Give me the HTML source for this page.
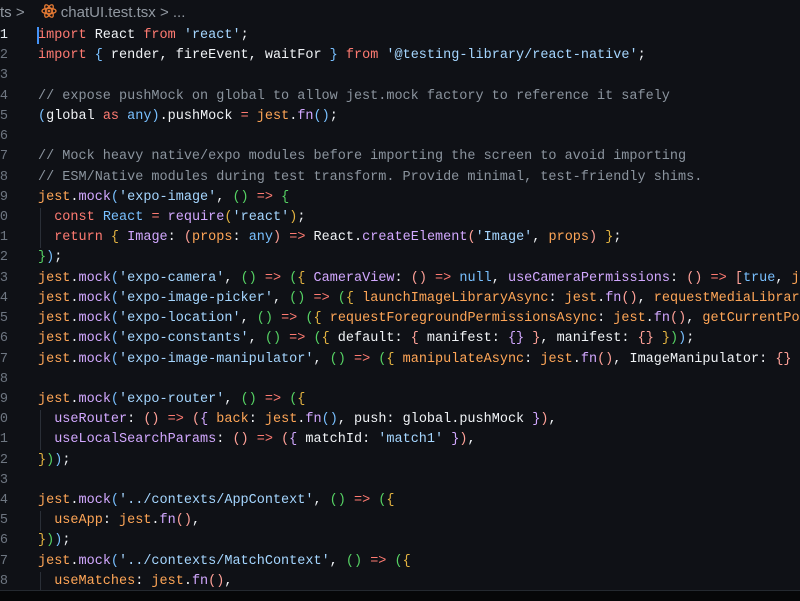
<!DOCTYPE html>
<html><head><meta charset="utf-8"><style>
html,body{margin:0;padding:0;width:800px;height:600px;overflow:hidden;background:#0f1116;}
.bc{position:absolute;top:3px;left:0;height:20px;font:15px "Liberation Sans",sans-serif;color:#9198a1;white-space:nowrap;line-height:20px;}
.code{position:absolute;top:26px;left:0;font:13.5px/20.22px "Liberation Mono",monospace;color:#f0f3f6;}
.ln{position:absolute;left:-40px;width:48px;text-align:right;color:#6e7681;}
.ln.a{color:#e6edf3;}
.l{position:relative;height:20.22px;padding-left:38px;white-space:pre;}
.k{color:#ff7b72}.s{color:#a5d6ff}.c{color:#8b949e}.f{color:#d2a8ff}.o{color:#ffa657}.b{color:#79c0ff}
.b1{color:#79c0ff}.b2{color:#56d364}.b3{color:#e3b341}.b4{color:#ffa198}
.ig{position:absolute;left:40px;width:1px;background:#2a2f37;}
.bar{position:absolute;left:0;top:590px;width:800px;height:10px;background:#060708;border-top:1px solid #24292f;}
.cur{position:absolute;left:37px;top:27px;width:2px;height:17px;background:#4493f8;}
</style></head><body>
<div class="bc">ts &gt; <svg width="16" height="16" viewBox="0 0 16 16" style="vertical-align:-2px;margin:0 4px 0 12px"><g fill="none" stroke="#e37933" stroke-width="1.3"><ellipse cx="8" cy="8" rx="7" ry="2.8"/><ellipse cx="8" cy="8" rx="7" ry="2.8" transform="rotate(60 8 8)"/><ellipse cx="8" cy="8" rx="7" ry="2.8" transform="rotate(120 8 8)"/></g><circle cx="8" cy="8" r="1.4" fill="#e37933"/></svg>chatUI.test.tsx &gt; ...</div>
<div class="ig" style="top:208px;height:40px"></div>
<div class="ig" style="top:410px;height:40px"></div>
<div class="ig" style="top:511px;height:20px"></div>
<div class="ig" style="top:572px;height:18px"></div>
<div class="code"><div class="l"><span class="ln a">1</span><span class="k">import</span> React <span class="k">from</span> <span class="s">'react'</span>;</div><div class="l"><span class="ln">2</span><span class="k">import</span> <span class="b1">{</span> render, fireEvent, waitFor <span class="b1">}</span> <span class="k">from</span> <span class="s">'@testing-library/react-native'</span>;</div><div class="l"><span class="ln">3</span></div><div class="l"><span class="ln">4</span><span class="c">// expose pushMock on global to allow jest.mock factory to reference it safely</span></div><div class="l"><span class="ln">5</span><span class="b1">(</span>global <span class="k">as</span> <span class="b">any</span><span class="b1">)</span>.pushMock <span class="k">=</span> <span class="o">jest</span>.<span class="f">fn</span><span class="b1">()</span>;</div><div class="l"><span class="ln">6</span></div><div class="l"><span class="ln">7</span><span class="c">// Mock heavy native/expo modules before importing the screen to avoid importing</span></div><div class="l"><span class="ln">8</span><span class="c">// ESM/Native modules during test transform. Provide minimal, test-friendly shims.</span></div><div class="l"><span class="ln">9</span><span class="o">jest</span>.<span class="f">mock</span><span class="b1">(</span><span class="s">'expo-image'</span>, <span class="b2">()</span> <span class="k">=&gt;</span> <span class="b2">{</span></div><div class="l"><span class="ln">10</span>  <span class="k">const</span> <span class="b">React</span> <span class="k">=</span> <span class="f">require</span><span class="b3">(</span><span class="s">'react'</span><span class="b3">)</span>;</div><div class="l"><span class="ln">11</span>  <span class="k">return</span> <span class="b3">{</span> <span class="f">Image</span>: <span class="b4">(</span><span class="o">props</span>: <span class="b">any</span><span class="b4">)</span> <span class="k">=&gt;</span> React.<span class="f">createElement</span><span class="b4">(</span><span class="s">'Image'</span>, <span class="o">props</span><span class="b4">)</span> <span class="b3">}</span>;</div><div class="l"><span class="ln">12</span><span class="b2">}</span><span class="b1">)</span>;</div><div class="l"><span class="ln">13</span><span class="o">jest</span>.<span class="f">mock</span><span class="b1">(</span><span class="s">'expo-camera'</span>, <span class="b2">()</span> <span class="k">=&gt;</span> <span class="b2">(</span><span class="b3">{</span> <span class="f">CameraView</span>: <span class="b4">()</span> <span class="k">=&gt;</span> <span class="b">null</span>, <span class="f">useCameraPermissions</span>: <span class="b4">()</span> <span class="k">=&gt;</span> <span class="b4">[</span><span class="b">true</span>, <span class="o">jest</span></div><div class="l"><span class="ln">14</span><span class="o">jest</span>.<span class="f">mock</span><span class="b1">(</span><span class="s">'expo-image-picker'</span>, <span class="b2">()</span> <span class="k">=&gt;</span> <span class="b2">(</span><span class="b3">{</span> <span class="o">launchImageLibraryAsync</span>: <span class="o">jest</span>.<span class="f">fn</span><span class="b4">()</span>, <span class="o">requestMediaLibrary</span></div><div class="l"><span class="ln">15</span><span class="o">jest</span>.<span class="f">mock</span><span class="b1">(</span><span class="s">'expo-location'</span>, <span class="b2">()</span> <span class="k">=&gt;</span> <span class="b2">(</span><span class="b3">{</span> <span class="o">requestForegroundPermissionsAsync</span>: <span class="o">jest</span>.<span class="f">fn</span><span class="b4">()</span>, <span class="o">getCurrentPo</span></div><div class="l"><span class="ln">16</span><span class="o">jest</span>.<span class="f">mock</span><span class="b1">(</span><span class="s">'expo-constants'</span>, <span class="b2">()</span> <span class="k">=&gt;</span> <span class="b2">(</span><span class="b3">{</span> default: <span class="b4">{</span> manifest: <span class="f">{}</span> <span class="b4">}</span>, manifest: <span class="b4">{}</span> <span class="b3">}</span><span class="b2">)</span><span class="b1">)</span>;</div><div class="l"><span class="ln">17</span><span class="o">jest</span>.<span class="f">mock</span><span class="b1">(</span><span class="s">'expo-image-manipulator'</span>, <span class="b2">()</span> <span class="k">=&gt;</span> <span class="b2">(</span><span class="b3">{</span> <span class="o">manipulateAsync</span>: <span class="o">jest</span>.<span class="f">fn</span><span class="b4">()</span>, ImageManipulator: <span class="b4">{}</span></div><div class="l"><span class="ln">18</span></div><div class="l"><span class="ln">19</span><span class="o">jest</span>.<span class="f">mock</span><span class="b1">(</span><span class="s">'expo-router'</span>, <span class="b2">()</span> <span class="k">=&gt;</span> <span class="b2">(</span><span class="b3">{</span></div><div class="l"><span class="ln">20</span>  <span class="f">useRouter</span>: <span class="b4">()</span> <span class="k">=&gt;</span> <span class="b4">(</span><span class="f">{</span> <span class="o">back</span>: <span class="o">jest</span>.<span class="f">fn</span><span class="b1">()</span>, push: global.pushMock <span class="f">}</span><span class="b4">)</span>,</div><div class="l"><span class="ln">21</span>  <span class="f">useLocalSearchParams</span>: <span class="b4">()</span> <span class="k">=&gt;</span> <span class="b4">(</span><span class="f">{</span> matchId: <span class="s">'match1'</span> <span class="f">}</span><span class="b4">)</span>,</div><div class="l"><span class="ln">22</span><span class="b3">}</span><span class="b2">)</span><span class="b1">)</span>;</div><div class="l"><span class="ln">23</span></div><div class="l"><span class="ln">24</span><span class="o">jest</span>.<span class="f">mock</span><span class="b1">(</span><span class="s">'../contexts/AppContext'</span>, <span class="b2">()</span> <span class="k">=&gt;</span> <span class="b2">(</span><span class="b3">{</span></div><div class="l"><span class="ln">25</span>  <span class="o">useApp</span>: <span class="o">jest</span>.<span class="f">fn</span><span class="b4">()</span>,</div><div class="l"><span class="ln">26</span><span class="b3">}</span><span class="b2">)</span><span class="b1">)</span>;</div><div class="l"><span class="ln">27</span><span class="o">jest</span>.<span class="f">mock</span><span class="b1">(</span><span class="s">'../contexts/MatchContext'</span>, <span class="b2">()</span> <span class="k">=&gt;</span> <span class="b2">(</span><span class="b3">{</span></div><div class="l"><span class="ln">28</span>  <span class="o">useMatches</span>: <span class="o">jest</span>.<span class="f">fn</span><span class="b4">()</span>,</div></div>
<div class="cur"></div>
<div class="bar"></div>
</body></html>
